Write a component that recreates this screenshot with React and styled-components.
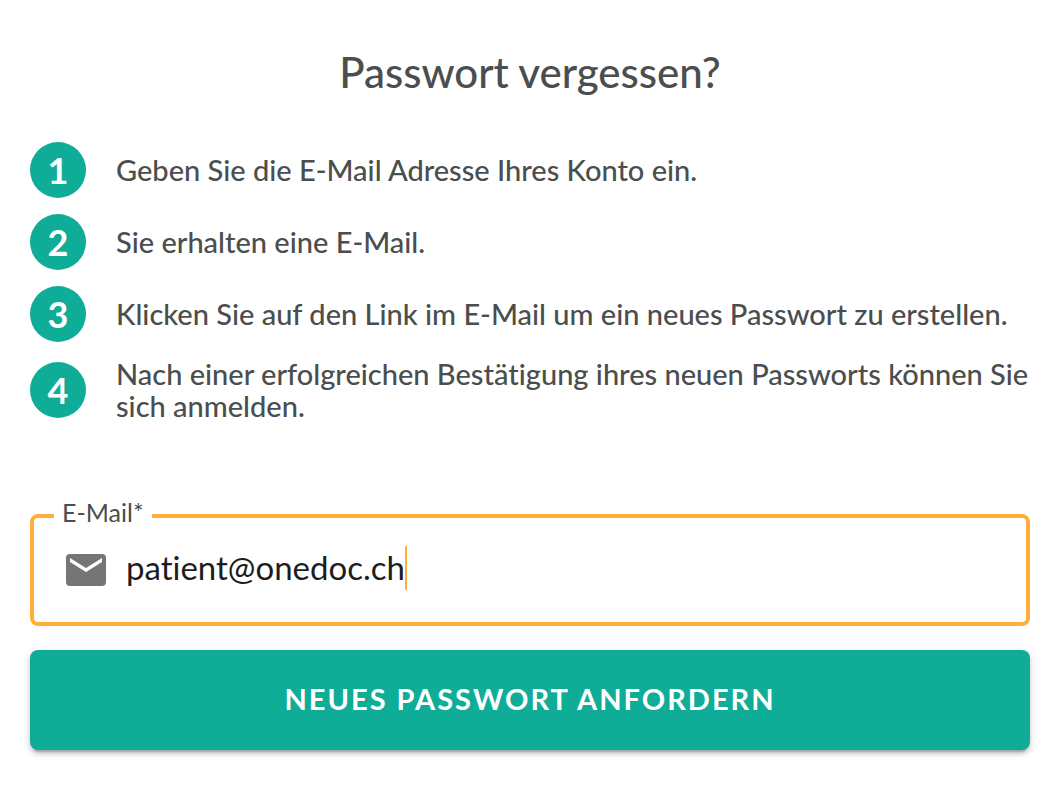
import React, { useState } from 'react';
import styled, { createGlobalStyle, ThemeProvider } from 'styled-components';

const theme = {
	primary: '#0fad97',
	accent: '#ffad3b',
	txtGrey: '#4a4e4e',
	txtDark: '#1d1d1d',
	iconGrey: '#757575',
	white: '#ffffff',
	fontBase: "Lato, 'Noto Sans', sans-serif",
	fontMedium: "'Lato Medium', Lato, 'Noto Sans', sans-serif",
};

const steps = [
	'Geben Sie die E-Mail Adresse Ihres Konto ein.',
	'Sie erhalten eine E-Mail.',
	'Klicken Sie auf den Link im E-Mail um ein neues Passwort zu erstellen.',
	'Nach einer erfolgreichen Bestätigung ihres neuen Passworts können Sie sich anmelden.',
];

const App = () => {
	const [email, setEmail] = useState('patient@onedoc.ch');

	return (
		<ThemeProvider theme={theme}>
			<GlobalStyle />
			<StyledPage>
				<StyledTitle>Passwort vergessen?</StyledTitle>
				<StyledSteps>
					{steps.map((step, i) => (
						<StyledStep key={step}>
							<StyledNumber>{i + 1}</StyledNumber>
							<StyledText>{step}</StyledText>
						</StyledStep>
					))}
				</StyledSteps>
				<StyledForm onSubmit={(e) => e.preventDefault()}>
					<StyledField>
						<StyledLegend>
							<label htmlFor='email'>E-Mail*</label>
						</StyledLegend>
						<StyledInputRow>
							<MailIcon />
							<StyledValue>
								<StyledInput
									id='email'
									type='email'
									value={email}
									onChange={(e) => setEmail(e.target.value)}
								/>
								<StyledCaret />
							</StyledValue>
						</StyledInputRow>
					</StyledField>
					<StyledButton type='submit'>Neues Passwort anfordern</StyledButton>
				</StyledForm>
			</StyledPage>
		</ThemeProvider>
	);
};

const MailIcon = () => (
	<StyledIcon viewBox='0 -4 40 36' aria-hidden='true'>
		<path d='M4 0h32a4 4 0 0 1 4 4v24a4 4 0 0 1-4 4H4a4 4 0 0 1-4-4V4a4 4 0 0 1 4-4zm32 8V4L20 14 4 4v4l16 10z' />
	</StyledIcon>
);

const GlobalStyle = createGlobalStyle`
	* {
		box-sizing: border-box;
	}
	body {
		margin: 0;
		background: #ffffff;
		font-family: Lato, 'Noto Sans', sans-serif;
		font-variant-ligatures: none;
	}
`;

const StyledPage = styled.main`
	padding: 48px 34px 46px 30px;
	color: ${({ theme }) => theme.txtGrey};
`;

const StyledTitle = styled.h1`
	margin: 0 0 46px;
	font-family: ${({ theme }) => theme.fontMedium};
	font-size: 42px;
	line-height: 48px;
	font-weight: 500;
	text-align: center;
`;

const StyledSteps = styled.ol`
	list-style: none;
	margin: 0;
	padding: 0;
	display: flex;
	flex-direction: column;
	row-gap: 16px;
`;

const StyledStep = styled.li`
	display: flex;
	align-items: center;
	column-gap: 30px;
`;

const StyledNumber = styled.span`
	flex: none;
	width: 56px;
	height: 56px;
	border-radius: 50%;
	background: ${({ theme }) => theme.primary};
	color: ${({ theme }) => theme.white};
	font-size: 36px;
	line-height: 56px;
	font-weight: bold;
	text-align: center;
`;

const StyledText = styled.span`
	font-family: ${({ theme }) => theme.fontMedium};
	font-size: 29px;
	line-height: 32px;
	font-weight: 500;
`;

const StyledForm = styled.form`
	margin-top: 78px;
`;

const StyledField = styled.fieldset`
	margin: 0 0 24px;
	padding: 0 32px;
	height: 126px;
	min-width: 0;
	border: 4px solid ${({ theme }) => theme.accent};
	border-radius: 8px;
`;

const StyledLegend = styled.legend`
	margin-left: -12px;
	padding: 0 8px 8px;
	font-size: 25px;
	line-height: 24px;
`;

const StyledInputRow = styled.div`
	display: flex;
	align-items: center;
	column-gap: 20px;
	padding-top: 14px;
`;

const StyledIcon = styled.svg`
	flex: none;
	width: 40px;
	height: 36px;
	fill: ${({ theme }) => theme.iconGrey};
`;

const StyledValue = styled.div`
	display: flex;
	align-items: center;
	flex: 1;
`;

const StyledInput = styled.input`
	field-sizing: content;
	border: none;
	outline: none;
	padding: 0 0 2px;
	background: transparent;
	color: ${({ theme }) => theme.txtDark};
	font-family: ${({ theme }) => theme.fontBase};
	font-variant-ligatures: none;
	font-size: 33px;
	height: 44px;
`;

const StyledCaret = styled.span`
	width: 2px;
	height: 44px;
	background: ${({ theme }) => theme.accent};
`;

const StyledButton = styled.button`
	display: block;
	width: 100%;
	height: 100px;
	padding: 0 0 4px;
	border: none;
	border-radius: 8px;
	background: ${({ theme }) => theme.primary};
	color: ${({ theme }) => theme.white};
	font-family: ${({ theme }) => theme.fontBase};
	font-size: 29px;
	font-weight: bold;
	letter-spacing: 2px;
	text-transform: uppercase;
	cursor: pointer;
	box-shadow: 0 6px 2px -4px rgba(0, 0, 0, 0.2), 0 4px 4px rgba(0, 0, 0, 0.14),
		0 2px 10px rgba(0, 0, 0, 0.12);
`;

export default App;
